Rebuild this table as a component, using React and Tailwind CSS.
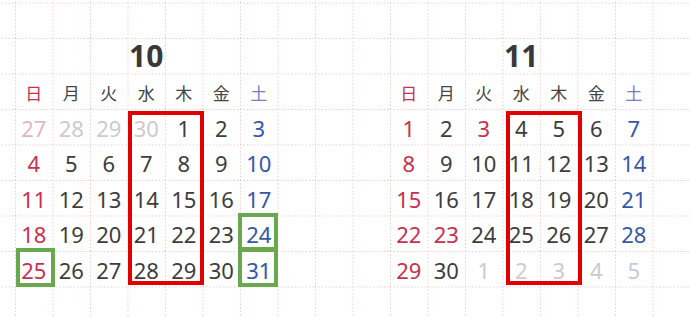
const WEEK = ['日', '月', '火', '水', '木', '金', '土']

const HEAD_COLOR = ['text-[#c8314d]', 'text-[#444]', 'text-[#444]', 'text-[#444]', 'text-[#444]', 'text-[#444]', 'text-[#7a7ac8]']

// n = weekday, s = sunday/holiday, a = saturday, g = other month, gs / ga = other month sunday / saturday
const TONE = {
  n: 'text-[#3d3d3d]',
  s: 'text-[#c8314d]',
  a: 'text-[#3457a8]',
  g: 'text-[#cbcbcb]',
  gs: 'text-[#e2b6bf]',
  ga: 'text-[#c3cbde]',
}

function weekTone(i) {
  return i === 0 ? 's' : i === 6 ? 'a' : 'n'
}

function buildOct() {
  const days = [[27, 'gs'], [28, 'g'], [29, 'g'], [30, 'g']]
  for (let d = 1; d <= 31; d++) days.push([d, weekTone((d + 3) % 7)])
  return days
}

function buildNov() {
  const days = []
  for (let d = 1; d <= 30; d++) {
    let t = weekTone((d - 1) % 7)
    if (d === 3 || d === 23) t = 's'
    days.push([d, t])
  }
  days.push([1, 'g'], [2, 'g'], [3, 'g'], [4, 'g'], [5, 'ga'])
  return days
}

function Box({ className }) {
  return <div className={`pointer-events-none absolute border-[4px] ${className}`} />
}

function Month({ title, days, children }) {
  return (
    <div className="w-[262.5px]">
      <div className="flex h-[35.5px] items-center justify-center">
        <span className="text-[30px] font-bold leading-none text-[#383838] [font-family:'Noto_Sans',sans-serif]">
          {title}
        </span>
      </div>
      <div className="grid h-[35.5px] grid-cols-7 items-center">
        {WEEK.map((w, i) => (
          <span
            key={w}
            className={`pt-[3px] text-center text-[17px] leading-none [font-family:'Noto_Sans_CJK_JP',sans-serif] ${HEAD_COLOR[i]}`}
          >
            {w}
          </span>
        ))}
      </div>
      <div className="relative grid grid-cols-7 auto-rows-[35.5px]">
        {days.map(([d, t], i) => (
          <span
            key={i}
            className={`flex items-center justify-center pt-[2px] text-[22px] leading-none [font-family:'Noto_Sans',sans-serif] ${TONE[t]}`}
          >
            {d}
          </span>
        ))}
        {children}
      </div>
    </div>
  )
}

function GridPaper() {
  return (
    <svg className="absolute inset-0" width="690" height="317">
      <defs>
        <pattern id="cells" x="15" y="2.5" width="37.5" height="35.5" patternUnits="userSpaceOnUse">
          <line x1="0.5" y1="0" x2="0.5" y2="35.5" stroke="#e2b3b3" strokeWidth="1" strokeDasharray="1 2.5" />
          <line x1="0" y1="0.5" x2="37.5" y2="0.5" stroke="#e2b3b3" strokeWidth="1" strokeDasharray="1 2.5" />
        </pattern>
      </defs>
      <rect width="690" height="317" fill="url(#cells)" />
    </svg>
  )
}

export default function App() {
  return (
    <div className="relative h-[317px] w-[690px] overflow-hidden bg-white">
      <GridPaper />
      <div className="relative flex gap-[112.5px] pl-[15px] pt-[38px]">
        <Month title="10" days={buildOct()}>
          <Box className="left-[113px] top-[2px] h-[174px] w-[76px] border-[#e00000]" />
          <Box className="left-[1px] top-[139px] h-[39px] w-[39px] border-[#6aa84f]" />
          <Box className="left-[223px] top-[104px] h-[38px] w-[40px] border-[#6aa84f]" />
          <Box className="left-[223px] top-[139px] h-[39px] w-[40px] border-[#6aa84f]" />
        </Month>
        <Month title="11" days={buildNov()}>
          <Box className="left-[116px] top-[2px] h-[174px] w-[76px] border-[#e00000]" />
        </Month>
      </div>
    </div>
  )
}
